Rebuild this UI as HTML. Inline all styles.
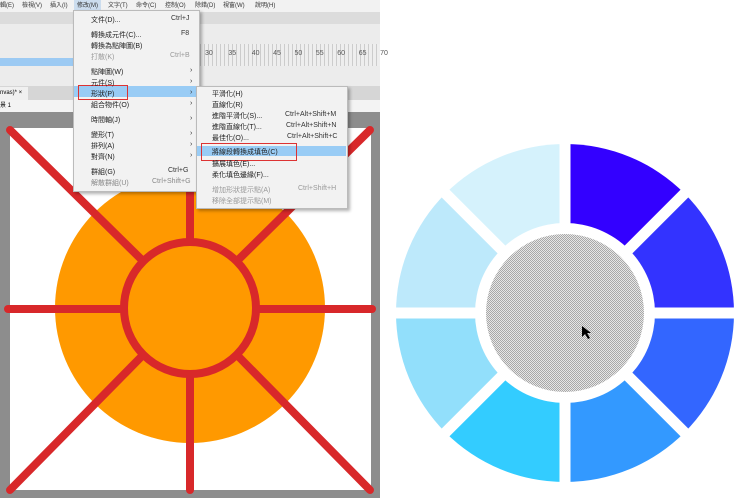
<!DOCTYPE html>
<html><head><meta charset="utf-8"><style>
body{margin:0;width:740px;height:498px;overflow:hidden;background:#fff;position:relative;font-family:"Liberation Sans","Noto Sans CJK TC",sans-serif;}
.a{position:absolute}
.mi{position:absolute;font-size:7px;color:#222;white-space:nowrap}
.sc{position:absolute;font-size:7px;color:#333;white-space:nowrap}
.mb span{position:absolute}
</style></head><body>
<div class="a" style="left:0;top:0;width:380px;height:498px;background:#8d8d8d"></div>
<div class="a mb" style="left:0;top:0;width:380px;height:12px;background:#f2f2f2;font-size:6px;color:#333;line-height:12px;white-space:nowrap">
<span style="left:0">輯(E)</span><span style="left:22px">檢視(V)</span><span style="left:50px">插入(I)</span><span style="left:74px;background:#cde;padding:0 3px">修改(M)</span><span style="left:108px">文字(T)</span><span style="left:136px">命令(C)</span><span style="left:165px">控制(O)</span><span style="left:195px">除錯(D)</span><span style="left:223px">視窗(W)</span><span style="left:255px">說明(H)</span></div>
<div class="a" style="left:0;top:12px;width:380px;height:12px;background:#dcdcdc"></div>
<div class="a" style="left:0;top:24px;width:380px;height:62px;background:#ececec"></div>
<div class="a" style="left:0;top:58px;width:75px;height:8px;background:#9ccaf3"></div>
<div class="a" style="left:200px;top:44px;width:180px;height:22px;background:repeating-linear-gradient(90deg,#ccc 0 1px,#eee 1px 4px)"></div>
<div class="sc" style="left:205px;top:50px;color:#555">30&nbsp;&nbsp;&nbsp;&nbsp;&nbsp;&nbsp;&nbsp;&nbsp;35&nbsp;&nbsp;&nbsp;&nbsp;&nbsp;&nbsp;&nbsp;&nbsp;40&nbsp;&nbsp;&nbsp;&nbsp;&nbsp;&nbsp;&nbsp;45&nbsp;&nbsp;&nbsp;&nbsp;&nbsp;&nbsp;&nbsp;50&nbsp;&nbsp;&nbsp;&nbsp;&nbsp;&nbsp;&nbsp;55&nbsp;&nbsp;&nbsp;&nbsp;&nbsp;&nbsp;&nbsp;60&nbsp;&nbsp;&nbsp;&nbsp;&nbsp;&nbsp;&nbsp;65&nbsp;&nbsp;&nbsp;&nbsp;&nbsp;&nbsp;&nbsp;70</div>
<div class="a" style="left:0;top:86px;width:380px;height:14px;background:#d6d6d6"></div>
<div class="a" style="left:0;top:87px;width:28px;height:13px;background:#f0f0f0;font-size:6px;line-height:13px">nvas)* ×</div>
<div class="a" style="left:0;top:100px;width:380px;height:12px;background:#f3f3f3;font-size:6px;line-height:12px">景 1</div>
<div class="a" style="left:10px;top:128px;width:361px;height:362px;background:#fff"></div>
<svg class="a" style="left:0;top:0" width="380" height="498">
<circle cx="190" cy="308" r="135" fill="#ff9900"/>
<g stroke="#d8282a" stroke-width="8" stroke-linecap="round" fill="none">
<line x1="10" y1="130" x2="143" y2="261"/><line x1="370" y1="130" x2="237" y2="261"/>
<line x1="10" y1="490" x2="143" y2="355"/><line x1="370" y1="490" x2="237" y2="355"/>
<line x1="8" y1="309" x2="124" y2="309"/><line x1="256" y1="309" x2="372" y2="309"/>
<line x1="190" y1="110" x2="190" y2="242"/><line x1="190" y1="374" x2="190" y2="490"/>
<circle cx="190" cy="308" r="66"/>
</g></svg>
<div class="a" style="left:73px;top:10px;width:125px;height:180px;background:#f2f2f2;border:1px solid #bbb;box-shadow:2px 2px 3px rgba(0,0,0,.3)"></div>
<div class="a" style="left:74px;top:86px;width:124px;height:11px;background:#99ccf5"></div>
<div class="a" style="left:78px;top:85px;width:48px;height:13px;border:1px solid #d33"></div>
<div class="mi" style="left:91px;top:15px">文件(D)...</div><div class="sc" style="left:171px;top:15px">Ctrl+J</div>
<div class="mi" style="left:91px;top:30px">轉換成元件(C)...</div><div class="sc" style="left:181px;top:30px">F8</div>
<div class="mi" style="left:91px;top:41px">轉換為點陣圖(B)</div>
<div class="mi" style="left:91px;top:52px;color:#999">打散(K)</div><div class="sc" style="left:170px;top:52px;color:#999">Ctrl+B</div>
<div class="mi" style="left:91px;top:67px">點陣圖(W)</div>
<div class="mi" style="left:91px;top:78px">元件(S)</div>
<div class="mi" style="left:91px;top:89px">形狀(P)</div>
<div class="mi" style="left:91px;top:100px">組合物件(O)</div>
<div class="mi" style="left:91px;top:115px">時間軸(J)</div>
<div class="mi" style="left:91px;top:130px">變形(T)</div>
<div class="mi" style="left:91px;top:141px">排列(A)</div>
<div class="mi" style="left:91px;top:152px">對齊(N)</div>
<div class="mi" style="left:91px;top:167px">群組(G)</div><div class="sc" style="left:168px;top:167px">Ctrl+G</div>
<div class="mi" style="left:91px;top:178px;color:#888">解散群組(U)</div><div class="sc" style="left:152px;top:178px;color:#888">Ctrl+Shift+G</div>
<div class="sc" style="left:190px;top:67px">›</div><div class="sc" style="left:190px;top:78px">›</div><div class="sc" style="left:190px;top:89px">›</div><div class="sc" style="left:190px;top:100px">›</div><div class="sc" style="left:190px;top:115px">›</div><div class="sc" style="left:190px;top:130px">›</div><div class="sc" style="left:190px;top:141px">›</div><div class="sc" style="left:190px;top:152px">›</div>
<div class="a" style="left:196px;top:86px;width:150px;height:121px;background:#f2f2f2;border:1px solid #bbb;box-shadow:2px 2px 3px rgba(0,0,0,.3)"></div>
<div class="a" style="left:197px;top:146px;width:149px;height:10px;background:#99ccf5"></div>
<div class="a" style="left:201px;top:143px;width:94px;height:16px;border:1px solid #d33"></div>
<div class="mi" style="left:212px;top:89px">平滑化(H)</div>
<div class="mi" style="left:212px;top:100px">直線化(R)</div>
<div class="mi" style="left:212px;top:111px">進階平滑化(S)...</div><div class="sc" style="left:285px;top:111px">Ctrl+Alt+Shift+M</div>
<div class="mi" style="left:212px;top:122px">進階直線化(T)...</div><div class="sc" style="left:286px;top:122px">Ctrl+Alt+Shift+N</div>
<div class="mi" style="left:212px;top:133px">最佳化(O)...</div><div class="sc" style="left:287px;top:133px">Ctrl+Alt+Shift+C</div>
<div class="mi" style="left:212px;top:147px">將線段轉換成填色(C)</div>
<div class="mi" style="left:212px;top:159px">擴展填色(E)...</div>
<div class="mi" style="left:212px;top:170px">柔化填色邊緣(F)...</div>
<div class="mi" style="left:212px;top:185px;color:#999">增加形狀提示點(A)</div><div class="sc" style="left:298px;top:185px;color:#999">Ctrl+Shift+H</div>
<div class="mi" style="left:212px;top:196px;color:#999">移除全部提示點(M)</div>
<svg class="a" style="left:380px;top:0" width="360" height="498">
<defs><pattern id="p" width="2" height="2" patternUnits="userSpaceOnUse"><rect width="2" height="2" fill="#e6e6e6"/><rect width="1" height="1" fill="#a8a8a8"/><rect x="1" y="1" width="1" height="1" fill="#a8a8a8"/></pattern></defs>
<g transform="translate(185,313)">
<path d="M0 0 L0 -169 A169 169 0 0 1 119.5 -119.5Z" fill="#3300ff"/>
<path d="M0 0 L119.5 -119.5 A169 169 0 0 1 169 0Z" fill="#3333ff"/>
<path d="M0 0 L169 0 A169 169 0 0 1 119.5 119.5Z" fill="#3366ff"/>
<path d="M0 0 L119.5 119.5 A169 169 0 0 1 0 169Z" fill="#3399ff"/>
<path d="M0 0 L0 169 A169 169 0 0 1 -119.5 119.5Z" fill="#33ccff"/>
<path d="M0 0 L-119.5 119.5 A169 169 0 0 1 -169 0Z" fill="#92dffb"/>
<path d="M0 0 L-169 0 A169 169 0 0 1 -119.5 -119.5Z" fill="#bde9fb"/>
<path d="M0 0 L-119.5 -119.5 A169 169 0 0 1 0 -169Z" fill="#d5f2fc"/>
<g stroke="#fff" stroke-width="11">
<line x1="0" y1="-175" x2="0" y2="175"/><line x1="-175" y1="0" x2="175" y2="0"/>
<line x1="-124" y1="-124" x2="124" y2="124"/><line x1="-124" y1="124" x2="124" y2="-124"/></g>
<circle r="90" fill="#fff"/>
<circle r="79" fill="url(#p)"/>
<path d="M17 13 L17 24 L20 21 L23 26 L25 25 L22 20 L26 20Z" fill="#000"/>
</g></svg>
</body></html>
